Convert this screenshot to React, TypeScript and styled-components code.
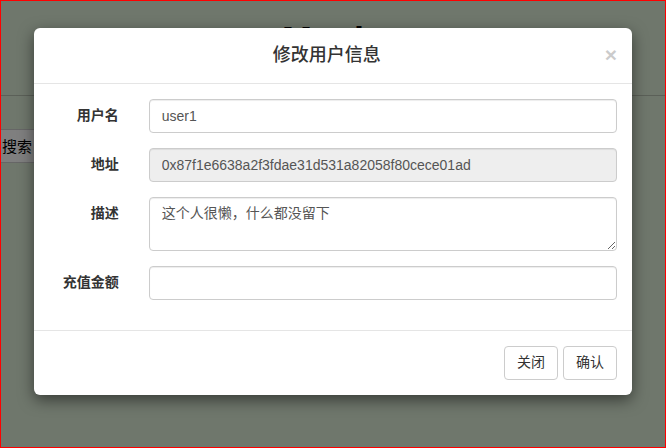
import React from "react";
import styled, { createGlobalStyle } from "styled-components";

const GlobalStyle = createGlobalStyle`
  * { box-sizing: border-box; }
  html, body { margin: 0; padding: 0; }
  body {
    font-family: "Liberation Sans", "Noto Sans CJK SC", sans-serif;
    font-size: 14px;
    line-height: 1.42857;
    color: #333;
  }
`;

const Page = styled.div`
  position: relative;
  width: 666px;
  height: 448px;
  overflow: hidden;
  background: #dfeed8;
  border: 1px solid #ff0000;
`;

const Header = styled.header`
  height: 95px;
  border-bottom: 1px solid #b6c1b1;
  text-align: center;
`;

const Heading = styled.h1`
  margin: 0;
  padding-top: 20px;
  font-size: 36px;
  font-weight: 700;
  line-height: 1.1;
  color: #000;
`;

const SearchBar = styled.div`
  display: flex;
  margin-top: 33px;
  margin-left: -8px;
`;

const SearchButton = styled.button`
  height: 34px;
  padding: 6px 8px;
  border: 1px solid #ccc;
  border-radius: 0 4px 4px 0;
  background: #fff;
  color: #000;
  font: inherit;
  font-size: 15px;
`;

const Backdrop = styled.div`
  position: absolute;
  inset: 0;
  background: rgba(0, 0, 0, 0.5);
`;

const Dialog = styled.div`
  position: absolute;
  left: 33px;
  top: 27px;
  width: 598px;
  background: #fff;
  border-radius: 6px;
  box-shadow: 0 5px 15px rgba(0, 0, 0, 0.5);
`;

const DialogHeader = styled.div`
  display: flex;
  align-items: center;
  padding: 15px;
  border-bottom: 1px solid #e5e5e5;
`;

const Title = styled.h4`
  flex: 1;
  height: 25px;
  margin: 0;
  font-size: 18px;
  font-weight: 500;
  line-height: 25px;
  text-align: center;
  color: #333;
`;

const Close = styled.button`
  padding: 0;
  border: 0;
  background: transparent;
  font-family: "Liberation Sans", sans-serif;
  font-size: 21px;
  font-weight: 700;
  line-height: 1;
  color: #000;
  opacity: 0.2;
  margin-top: -2px;
`;

const Body = styled.div`
  padding: 15px;
`;

const Row = styled.div`
  display: grid;
  grid-template-columns: 99.67px 1fr;
  margin: 0 -15px 15px;
`;

const Label = styled.label`
  padding: 7px 15px 0;
  text-align: right;
  font-weight: 700;
  color: #333;
`;

const Field = styled.div`
  padding: 0 15px;
`;

const fieldCss = `
  display: block;
  width: 100%;
  padding: 6px 12px;
  font-family: "Liberation Sans", "Noto Sans CJK SC", sans-serif;
  font-size: 14px;
  line-height: 1.42857;
  color: #555;
  background: #fff;
  border: 1px solid #ccc;
  border-radius: 4px;
  box-shadow: inset 0 1px 1px rgba(0, 0, 0, 0.075);
  outline: none;
`;

const Input = styled.input`
  ${fieldCss}
  height: 34px;
  &:disabled {
    background: #eee;
    color: #555;
    opacity: 1;
  }
`;

const TextArea = styled.textarea`
  ${fieldCss}
  height: 54px;
  resize: vertical;
`;

const Footer = styled.div`
  display: flex;
  justify-content: flex-end;
  gap: 5px;
  padding: 15px;
  border-top: 1px solid #e5e5e5;
`;

const Button = styled.button`
  height: 34px;
  padding: 6px 12px;
  font-family: "Liberation Sans", "Noto Sans CJK SC", sans-serif;
  font-size: 14px;
  line-height: 1.42857;
  color: #333;
  background: #fff;
  border: 1px solid #ccc;
  border-radius: 4px;
`;

const fields = [
  { label: "用户名", value: "user1" },
  { label: "地址", value: "0x87f1e6638a2f3fdae31d531a82058f80cece01ad", disabled: true },
];

export default function App() {
  return (
    <>
      <GlobalStyle />
      <Page>
        <Header>
          <Heading>Music</Heading>
        </Header>
        <SearchBar>
          <SearchButton>搜索</SearchButton>
        </SearchBar>
        <Backdrop />
        <Dialog>
          <DialogHeader>
            <Title>修改用户信息</Title>
            <Close aria-label="close">×</Close>
          </DialogHeader>
          <Body>
            {fields.map((f) => (
              <Row key={f.label}>
                <Label>{f.label}</Label>
                <Field>
                  <Input defaultValue={f.value} disabled={f.disabled} />
                </Field>
              </Row>
            ))}
            <Row>
              <Label>描述</Label>
              <Field>
                <TextArea rows={2} defaultValue="这个人很懒，什么都没留下" />
              </Field>
            </Row>
            <Row>
              <Label>充值金额</Label>
              <Field>
                <Input />
              </Field>
            </Row>
          </Body>
          <Footer>
            <Button>关闭</Button>
            <Button>确认</Button>
          </Footer>
        </Dialog>
      </Page>
    </>
  );
}
